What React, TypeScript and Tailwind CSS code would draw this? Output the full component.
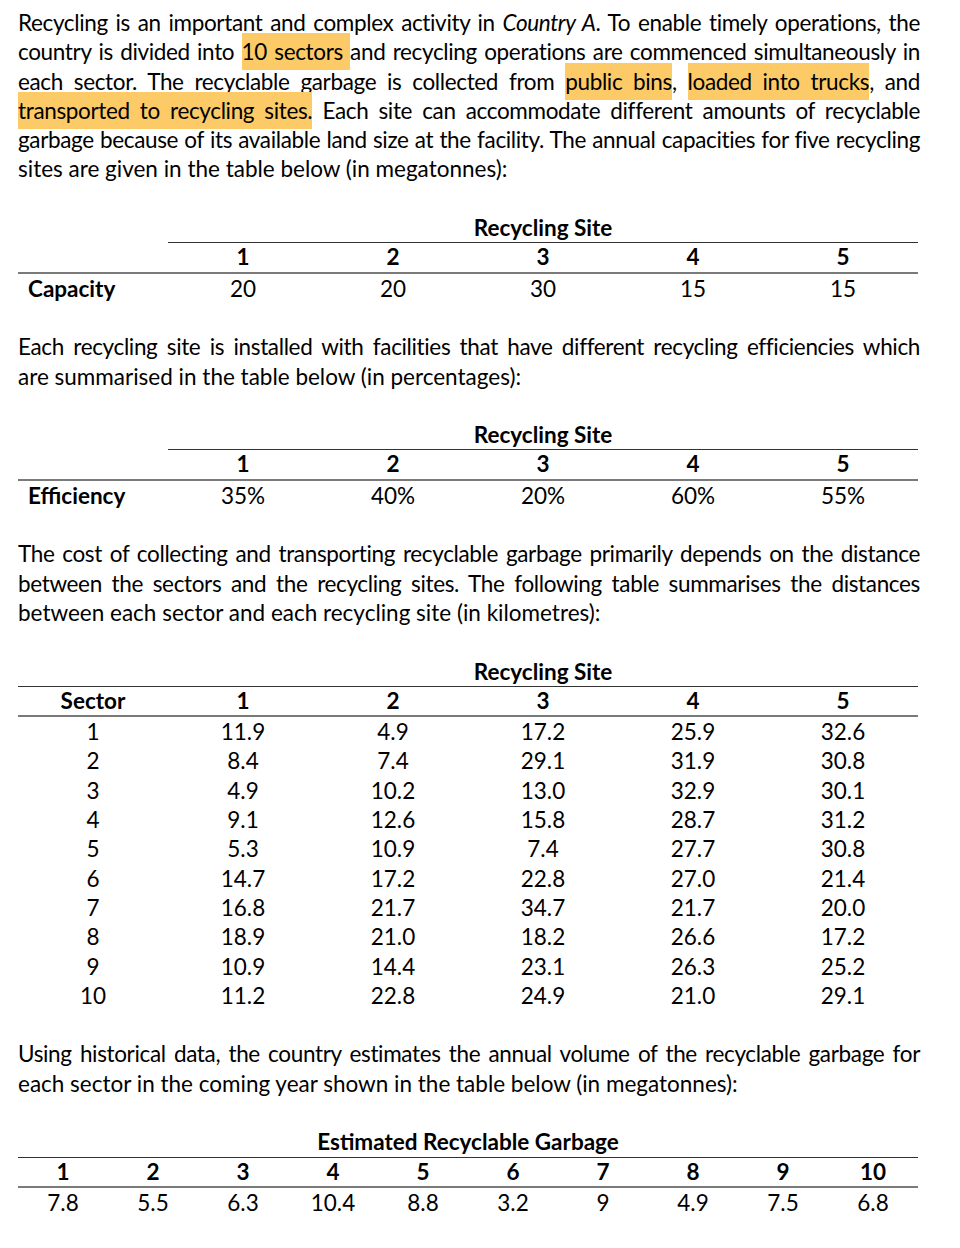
const hl = "bg-[#fdca68] py-[5px]"

const sites = [1, 2, 3, 4, 5]

const distances = [
  ["11.9", "4.9", "17.2", "25.9", "32.6"],
  ["8.4", "7.4", "29.1", "31.9", "30.8"],
  ["4.9", "10.2", "13.0", "32.9", "30.1"],
  ["9.1", "12.6", "15.8", "28.7", "31.2"],
  ["5.3", "10.9", "7.4", "27.7", "30.8"],
  ["14.7", "17.2", "22.8", "27.0", "21.4"],
  ["16.8", "21.7", "34.7", "21.7", "20.0"],
  ["18.9", "21.0", "18.2", "26.6", "17.2"],
  ["10.9", "14.4", "23.1", "26.3", "25.2"],
  ["11.2", "22.8", "24.9", "21.0", "29.1"],
]

const garbage = ["7.8", "5.5", "6.3", "10.4", "8.8", "3.2", "9", "4.9", "7.5", "6.8"]

// each printed line is its own row so the breaks match the page; full lines are stretched edge to edge
function Line({ children, last = false }: { children: React.ReactNode; last?: boolean }) {
  return (
    <div
      className={
        last
          ? "whitespace-nowrap"
          : "whitespace-nowrap text-justify tracking-[-0.35px] [text-align-last:justify]"
      }
    >
      {children}
    </div>
  )
}

function SiteTable({ label, values }: { label: string; values: string[] }) {
  return (
    <div className="w-[900px]">
      <div className="grid grid-cols-[150px_750px]">
        <div />
        <div className="border-b border-[#333] text-center font-bold">Recycling Site</div>
      </div>
      <div className="grid grid-cols-6 border-b-2 border-[#7a7a7a] text-center font-bold leading-[28.3px]">
        <div />
        {sites.map((s) => (
          <div key={s}>{s}</div>
        ))}
      </div>
      <div className="grid grid-cols-6 text-center">
        <div className="pl-[10px] text-left font-bold">{label}</div>
        {values.map((v, i) => (
          <div key={i}>{v}</div>
        ))}
      </div>
    </div>
  )
}

function DistanceTable() {
  return (
    <div className="w-[900px]">
      <div className="grid grid-cols-[150px_750px] border-b border-[#333]">
        <div />
        <div className="text-center font-bold">Recycling Site</div>
      </div>
      <div className="grid grid-cols-6 border-b-2 border-[#7a7a7a] text-center font-bold leading-[28.3px]">
        <div>Sector</div>
        {sites.map((s) => (
          <div key={s}>{s}</div>
        ))}
      </div>
      {distances.map((row, i) => (
        <div key={i} className="grid grid-cols-6 text-center">
          <div>{i + 1}</div>
          {row.map((v, j) => (
            <div key={j}>{v}</div>
          ))}
        </div>
      ))}
    </div>
  )
}

function GarbageTable() {
  return (
    <div className="w-[900px]">
      <div className="border-b border-[#333] text-center font-bold">Estimated Recyclable Garbage</div>
      <div className="grid grid-cols-10 border-b-2 border-[#7a7a7a] text-center font-bold leading-[28.3px]">
        {garbage.map((_, i) => (
          <div key={i}>{i + 1}</div>
        ))}
      </div>
      <div className="grid grid-cols-10 text-center">
        {garbage.map((v, i) => (
          <div key={i}>{v}</div>
        ))}
      </div>
    </div>
  )
}

export default function App() {
  return (
    <div className="min-h-[1248px] w-[960px] bg-white pt-[8px] font-['Lato','Noto_Sans',sans-serif] text-[22.5px] leading-[29.3px] text-black">
      <div className="ml-[18px] flex w-[902px] flex-col gap-[29.3px]">
        <div>
          <Line>
            Recycling is an important and complex activity in <i>Country A</i>. To enable timely operations, the
          </Line>
          <Line>
            country is divided into <span className={hl}>10 sectors </span>and recycling operations are commenced
            simultaneously in
          </Line>
          <Line>
            each sector. The recyclable garbage is collected from <span className={hl}>public bins</span>,{" "}
            <span className={hl}>loaded into trucks</span>, and
          </Line>
          <Line>
            <span className={hl}>transported to recycling sites.</span> Each site can accommodate different amounts of
            recyclable
          </Line>
          <Line>
            garbage because of its available land size at the facility. The annual capacities for five recycling
          </Line>
          <Line last>sites are given in the table below (in megatonnes):</Line>
        </div>

        <SiteTable label="Capacity" values={["20", "20", "30", "15", "15"]} />

        <div>
          <Line>
            Each recycling site is installed with facilities that have different recycling efficiencies which
          </Line>
          <Line last>are summarised in the table below (in percentages):</Line>
        </div>

        <SiteTable label="Efficiency" values={["35%", "40%", "20%", "60%", "55%"]} />

        <div>
          <Line>
            The cost of collecting and transporting recyclable garbage primarily depends on the distance
          </Line>
          <Line>
            between the sectors and the recycling sites. The following table summarises the distances
          </Line>
          <Line last>between each sector and each recycling site (in kilometres):</Line>
        </div>

        <DistanceTable />

        <div>
          <Line>
            Using historical data, the country estimates the annual volume of the recyclable garbage for
          </Line>
          <Line last>each sector in the coming year shown in the table below (in megatonnes):</Line>
        </div>

        <GarbageTable />
      </div>
    </div>
  )
}
